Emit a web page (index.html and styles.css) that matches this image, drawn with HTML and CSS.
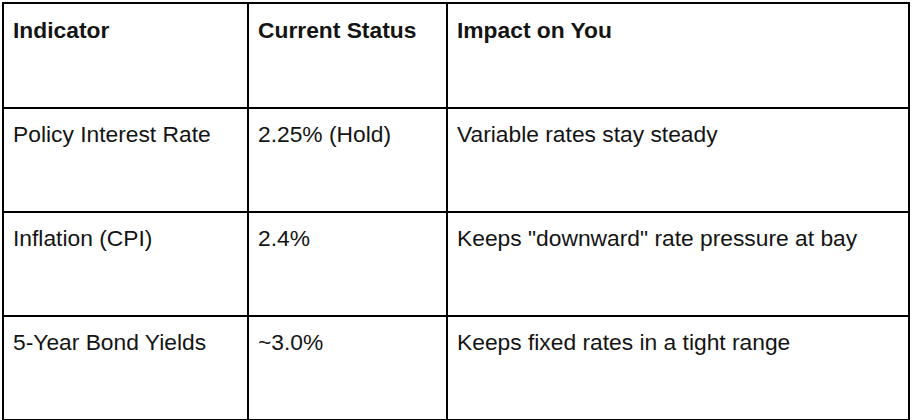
FILE: index.html
```html
<!DOCTYPE html>
<html>
<head>
<meta charset="utf-8">
<link rel="stylesheet" href="styles.css">
</head>
<body>
<table class="rates">
  <colgroup>
    <col class="c1">
    <col class="c2">
    <col class="c3">
  </colgroup>
  <tr class="head">
    <th>Indicator</th>
    <th>Current Status</th>
    <th>Impact on You</th>
  </tr>
  <tr>
    <td>Policy Interest Rate</td>
    <td>2.25% (Hold)</td>
    <td>Variable rates stay steady</td>
  </tr>
  <tr>
    <td>Inflation (CPI)</td>
    <td>2.4%</td>
    <td>Keeps "downward" rate pressure at bay</td>
  </tr>
  <tr>
    <td>5-Year Bond Yields</td>
    <td>~3.0%</td>
    <td>Keeps fixed rates in a tight range</td>
  </tr>
</table>
</body>
</html>
```
FILE: styles.css
```css
html, body {
  margin: 0;
  padding: 0;
  background: #fff;
}
body {
  font-family: "Liberation Sans", Arial, sans-serif;
  font-size: 22.8px;
  color: #141414;
}
.rates {
  border-collapse: collapse;
  margin: 2px 0 0 2px;
  width: 908px;
}
.c1 { width: 245px; }
.c2 { width: 199px; }
.rates th,
.rates td {
  border: 2px solid #000;
  text-align: left;
  vertical-align: top;
  padding: 12px 9px 0 9px;
  height: 90px;
}
.rates th {
  font-weight: bold;
  padding-top: 13px;
  height: 90px;
}
```
